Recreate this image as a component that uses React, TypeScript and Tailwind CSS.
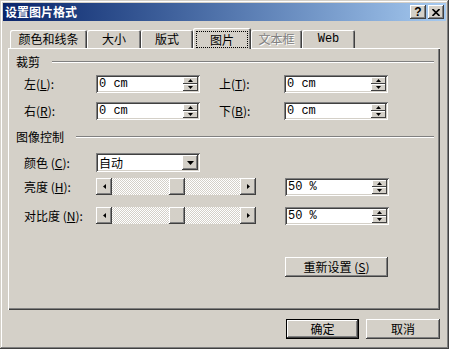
const raised =
  "shadow-[inset_-1px_-1px_#404040,inset_1px_1px_#ffffff,inset_-2px_-2px_#808080,inset_2px_2px_#d4d0c8]";
const raisedThin = "shadow-[inset_-1px_-1px_#404040,inset_1px_1px_#ffffff]";
const sunken =
  "shadow-[inset_1px_1px_#808080,inset_-1px_-1px_#ffffff,inset_2px_2px_#404040,inset_-2px_-2px_#d4d0c8]";
const cjk = "font-['Noto_Sans_CJK_SC',sans-serif]";
const mono = "font-['Liberation_Mono',monospace]";

type Dir = "up" | "down" | "left" | "right";

const Arrow = ({ dir, w, h }: { dir: Dir; w: number; h: number }) => {
  const pts: Record<Dir, string> = {
    up: `0,${h} ${w / 2},0 ${w},${h}`,
    down: `0,0 ${w},0 ${w / 2},${h}`,
    left: `${w},0 ${w},${h} 0,${h / 2}`,
    right: `0,0 ${w},${h / 2} 0,${h}`,
  };
  return (
    <svg width={w} height={h} viewBox={`0 0 ${w} ${h}`} className="block">
      <polygon points={pts[dir]} fill="#000" />
    </svg>
  );
};

const Label = ({ text, k, w }: { text: string; k: string; w: string }) => (
  <span className={`${w} text-[12px] leading-[14px] text-black ${cjk}`}>
    {text}(<u>{k}</u>):
  </span>
);

const SpinBox = ({ value }: { value: string }) => (
  <div className={`flex h-[18px] w-[104px] bg-white p-[2px] ${sunken}`}>
    <span className={`flex-1 pl-[1px] text-[12px] leading-[14px] text-black ${mono}`}>{value}</span>
    <div className="flex w-[15px] flex-col">
      <div className={`flex h-[7px] items-center justify-center bg-[#d4d0c8] ${raisedThin}`}>
        <Arrow dir="up" w={5} h={3} />
      </div>
      <div className={`flex h-[7px] items-center justify-center bg-[#d4d0c8] ${raisedThin}`}>
        <Arrow dir="down" w={5} h={3} />
      </div>
    </div>
  </div>
);

const Slider = () => (
  <div className="flex h-[17px] w-[160px] bg-[image:repeating-conic-gradient(#ffffff_0_25%,#d4d0c8_0_50%)] bg-[length:2px_2px]">
    <div className={`flex w-[16px] items-center justify-center bg-[#d4d0c8] ${raised}`}>
      <Arrow dir="left" w={3} h={5} />
    </div>
    <div className="flex flex-1 pl-[57px]">
      <div className={`h-full w-[16px] bg-[#d4d0c8] ${raised}`} />
    </div>
    <div className={`flex w-[16px] items-center justify-center bg-[#d4d0c8] ${raised}`}>
      <Arrow dir="right" w={3} h={5} />
    </div>
  </div>
);

const GroupHead = ({ title }: { title: string }) => (
  <div className="flex h-[14px] items-center pl-[8px] pr-[6px]">
    <span className={`text-[12px] leading-[14px] text-black ${cjk}`}>{title}</span>
    <div className="ml-[12px] h-[2px] flex-1 border-t border-b border-t-[#808080] border-b-white" />
  </div>
);

const tabs = [
  { label: "颜色和线条", w: "w-[77px]" },
  { label: "大小", w: "w-[54px]" },
  { label: "版式", w: "w-[52px]" },
  { label: "图片", w: "w-[58px]", active: true },
  { label: "文本框", w: "w-[51px]", disabled: true },
  { label: "Web", w: "w-[53px]", mono: true },
];

export default function App() {
  return (
    <div
      className={`flex h-[349px] w-[449px] flex-col bg-[#d4d0c8] p-[3px] shadow-[inset_-1px_-1px_#404040,inset_1px_1px_#d4d0c8,inset_-2px_-2px_#808080,inset_2px_2px_#ffffff] ${cjk}`}
    >
      {/* title bar */}
      <div className="flex h-[18px] items-center justify-between bg-linear-to-r from-[#0a246a] to-[#a6caf0] px-[2px]">
        <span className="text-[12px] font-bold leading-[14px] text-white">设置图片格式</span>
        <div className="flex gap-[2px]">
          <div className={`flex h-[14px] w-[16px] items-center justify-center bg-[#d4d0c8] ${raised}`}>
            <span className="font-['Liberation_Sans',sans-serif] text-[12px] font-bold leading-none text-black">?</span>
          </div>
          <div className={`flex h-[14px] w-[16px] items-center justify-center bg-[#d4d0c8] ${raised}`}>
            <svg width="8" height="7" viewBox="0 0 8 7" className="block">
              <path d="M0.5 0 L7.5 7 M7.5 0 L0.5 7" stroke="#000" strokeWidth="1.6" />
            </svg>
          </div>
        </div>
      </div>

      <div className="ml-[5px] mr-[6px] mt-[7px] flex flex-col">
        {/* tabs */}
        <div className="flex h-[20px] items-end pl-[2px]">
          {tabs.map((t) =>
            t.active ? (
              <div
                key={t.label}
                className={`relative z-10 -mb-px flex h-[21px] ${t.w} rounded-t-[2px] bg-[#d4d0c8] px-[3px] pb-[1px] pt-[3px] shadow-[inset_1px_1px_#ffffff,inset_-1px_0_#404040,inset_-2px_0_#808080]`}
              >
                <div className="flex flex-1 items-center justify-center border border-dotted border-black text-[12px] leading-[14px] text-black">
                  {t.label}
                </div>
              </div>
            ) : (
              <div
                key={t.label}
                className={`flex h-[18px] ${t.w} items-center justify-center rounded-t-[2px] text-[12px] leading-[14px] shadow-[inset_1px_1px_#ffffff,inset_-1px_0_#404040,inset_-2px_0_#808080] ${
                  t.disabled ? "text-[#808080] [text-shadow:1px_1px_#ffffff]" : "text-black"
                } ${t.mono ? mono : ""}`}
              >
                {t.label}
              </div>
            )
          )}
        </div>

        {/* panel */}
        <div className="relative flex h-[262px] flex-col shadow-[inset_1px_1px_#ffffff,inset_-1px_-1px_#404040,inset_-2px_-2px_#808080]">
          <div className="mt-[7px]">
            <GroupHead title="裁剪" />
          </div>

          <div className="mt-[6px] flex h-[18px] items-center pl-[16px]">
            <Label text="左" k="L" w="w-[72px]" />
            <SpinBox value="0 cm" />
            <div className="w-[19px]" />
            <Label text="上" k="T" w="w-[65px]" />
            <SpinBox value="0 cm" />
          </div>

          <div className="mt-[9px] flex h-[18px] items-center pl-[16px]">
            <Label text="右" k="R" w="w-[72px]" />
            <SpinBox value="0 cm" />
            <div className="w-[19px]" />
            <Label text="下" k="B" w="w-[65px]" />
            <SpinBox value="0 cm" />
          </div>

          <div className="mt-[10px]">
            <GroupHead title="图像控制" />
          </div>

          <div className="mt-[9px] flex h-[19px] items-center pl-[16px]">
            <Label text="颜色 " k="C" w="w-[72px]" />
            <div className={`flex h-[19px] w-[104px] bg-white p-[2px] ${sunken}`}>
              <span className="flex-1 pl-[1px] text-[12px] leading-[15px] text-black">自动</span>
              <div className={`flex w-[16px] items-center justify-center bg-[#d4d0c8] ${raised}`}>
                <Arrow dir="down" w={7} h={4} />
              </div>
            </div>
          </div>

          <div className="mt-[6px] flex h-[17px] items-center pl-[16px]">
            <Label text="亮度 " k="H" w="w-[72px]" />
            <Slider />
            <div className="ml-[29px]">
              <SpinBox value="50 %" />
            </div>
          </div>

          <div className="mt-[12px] flex h-[17px] items-center pl-[16px]">
            <Label text="对比度 " k="N" w="w-[72px]" />
            <Slider />
            <div className="ml-[29px]">
              <SpinBox value="50 %" />
            </div>
          </div>

          <div className="mt-[33px] flex pl-[277px]">
            <button
              className={`flex h-[20px] w-[103px] items-center justify-center bg-[#d4d0c8] text-[12px] leading-[14px] text-black ${raised}`}
            >
              重新设置 (<u>S</u>)
            </button>
          </div>
        </div>

        {/* dialog buttons */}
        <div className="mt-[9px] flex justify-end gap-[7px]">
          <div className="h-[20px] w-[73px] border border-black">
            <button
              className={`flex h-full w-full items-center justify-center bg-[#d4d0c8] text-[12px] leading-[14px] text-black ${raised}`}
            >
              确定
            </button>
          </div>
          <button
            className={`flex h-[20px] w-[74px] items-center justify-center bg-[#d4d0c8] text-[12px] leading-[14px] text-black ${raised}`}
          >
            取消
          </button>
        </div>
      </div>
    </div>
  );
}
